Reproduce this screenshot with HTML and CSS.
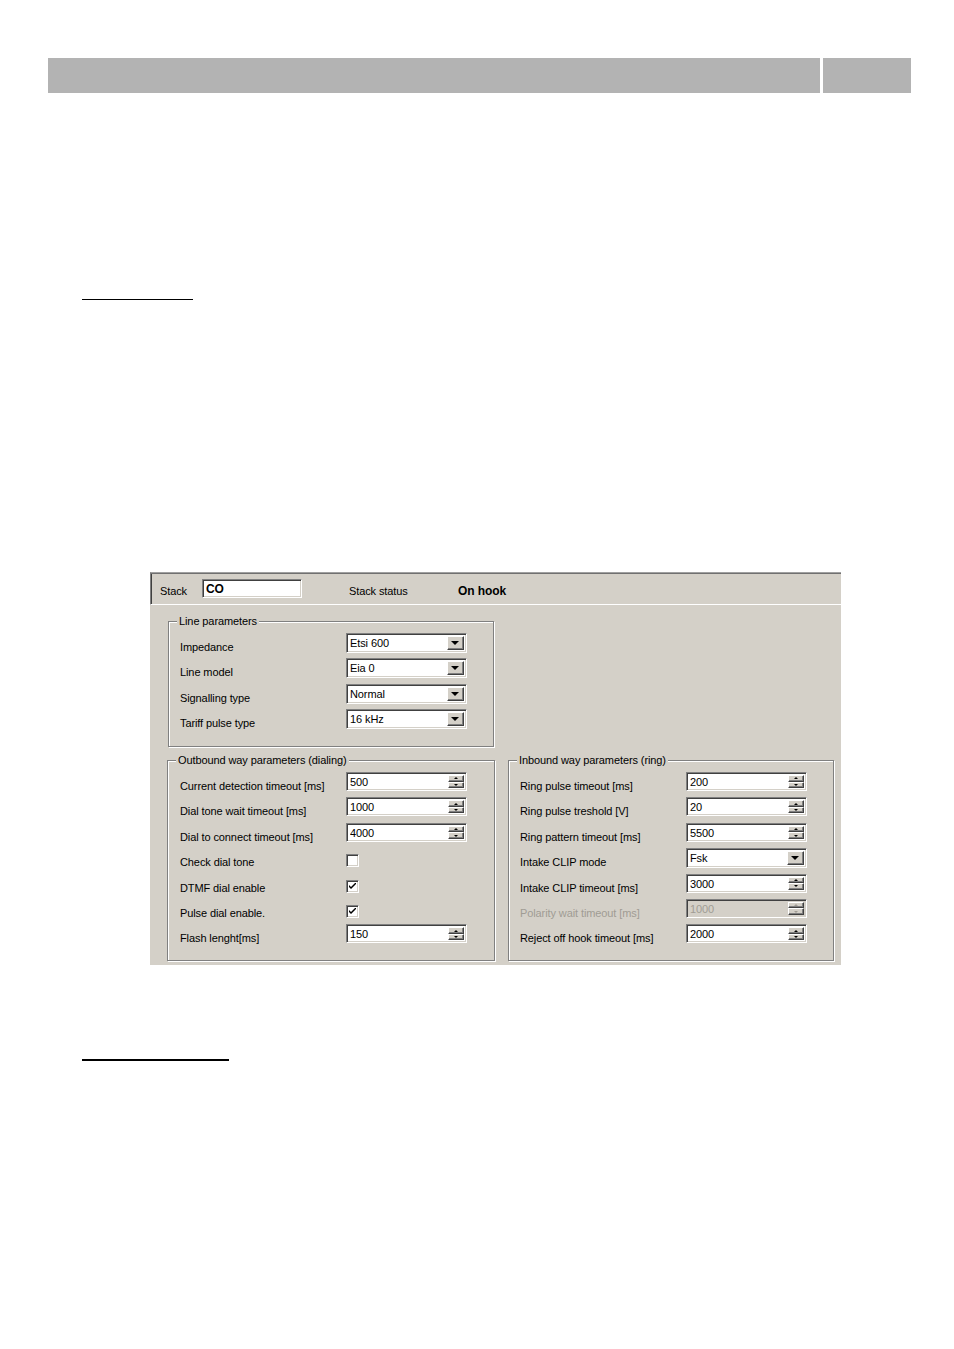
FILE: index.html
```html
<!DOCTYPE html>
<html>
<head>
<meta charset="utf-8">
<link rel="stylesheet" href="styles.css">
</head>
<body>
<div class="topbar"><div class="seg seg-main"></div><div class="seg seg-side"></div></div>
<div class="rule rule-a"></div>
<div class="panel">
  <div class="stackbar">
    <span class="stack-lbl">Stack</span>
    <div class="edit stack-edit"><span class="val bold">CO</span></div>
    <span class="status-lbl">Stack status</span>
    <span class="status-val">On hook</span>
  </div>
  <div class="panel-body">
    <div class="group group-line">
      <span class="group-title">Line parameters</span>
      <div class="row"><span class="lbl">Impedance</span><div class="edit combo"><span class="val">Etsi 600</span><span class="btn dd"><i></i></span></div></div>
      <div class="row"><span class="lbl">Line model</span><div class="edit combo"><span class="val">Eia 0</span><span class="btn dd"><i></i></span></div></div>
      <div class="row"><span class="lbl">Signalling type</span><div class="edit combo"><span class="val">Normal</span><span class="btn dd"><i></i></span></div></div>
      <div class="row"><span class="lbl">Tariff pulse type</span><div class="edit combo"><span class="val">16 kHz</span><span class="btn dd"><i></i></span></div></div>
    </div>
    <div class="group-row">
      <div class="group group-out">
        <span class="group-title">Outbound way parameters (dialing)</span>
        <div class="row"><span class="lbl">Current detection timeout [ms]</span><div class="edit spin"><span class="val">500</span><span class="spinbox"><span class="btn up"><i></i></span><span class="btn down"><i></i></span></span></div></div>
        <div class="row"><span class="lbl">Dial tone wait timeout [ms]</span><div class="edit spin"><span class="val">1000</span><span class="spinbox"><span class="btn up"><i></i></span><span class="btn down"><i></i></span></span></div></div>
        <div class="row"><span class="lbl">Dial to connect timeout [ms]</span><div class="edit spin"><span class="val">4000</span><span class="spinbox"><span class="btn up"><i></i></span><span class="btn down"><i></i></span></span></div></div>
        <div class="row"><span class="lbl">Check dial tone</span><span class="check"></span></div>
        <div class="row"><span class="lbl">DTMF dial enable</span><span class="check checked"><svg viewBox="0 0 7 7" width="7" height="7"><path d="M0 2 L2 4 L7 -1 L7 1 L2 6 L0 4 Z" fill="#000"/></svg></span></div>
        <div class="row"><span class="lbl">Pulse dial enable.</span><span class="check checked"><svg viewBox="0 0 7 7" width="7" height="7"><path d="M0 2 L2 4 L7 -1 L7 1 L2 6 L0 4 Z" fill="#000"/></svg></span></div>
        <div class="row"><span class="lbl">Flash lenght[ms]</span><div class="edit spin"><span class="val">150</span><span class="spinbox"><span class="btn up"><i></i></span><span class="btn down"><i></i></span></span></div></div>
      </div>
      <div class="group group-in">
        <span class="group-title">Inbound way parameters (ring)</span>
        <div class="row"><span class="lbl">Ring pulse timeout [ms]</span><div class="edit spin"><span class="val">200</span><span class="spinbox"><span class="btn up"><i></i></span><span class="btn down"><i></i></span></span></div></div>
        <div class="row"><span class="lbl">Ring pulse treshold [V]</span><div class="edit spin"><span class="val">20</span><span class="spinbox"><span class="btn up"><i></i></span><span class="btn down"><i></i></span></span></div></div>
        <div class="row"><span class="lbl">Ring pattern timeout [ms]</span><div class="edit spin"><span class="val">5500</span><span class="spinbox"><span class="btn up"><i></i></span><span class="btn down"><i></i></span></span></div></div>
        <div class="row"><span class="lbl">Intake CLIP mode</span><div class="edit combo"><span class="val">Fsk</span><span class="btn dd"><i></i></span></div></div>
        <div class="row"><span class="lbl">Intake CLIP timeout [ms]</span><div class="edit spin"><span class="val">3000</span><span class="spinbox"><span class="btn up"><i></i></span><span class="btn down"><i></i></span></span></div></div>
        <div class="row disabled"><span class="lbl">Polarity wait timeout [ms]</span><div class="edit spin"><span class="val">1000</span><span class="spinbox"><span class="btn up"><i></i></span><span class="btn down"><i></i></span></span></div></div>
        <div class="row"><span class="lbl">Reject off hook timeout [ms]</span><div class="edit spin"><span class="val">2000</span><span class="spinbox"><span class="btn up"><i></i></span><span class="btn down"><i></i></span></span></div></div>
      </div>
    </div>
  </div>
</div>
<div class="rule rule-b"></div>
</body>
</html>
```
FILE: styles.css
```css
html, body {
  margin: 0;
  padding: 0;
  background: #ffffff;
}
body {
  font-family: "Liberation Sans", Arial, sans-serif;
  font-size: 11px;
  letter-spacing: -0.1px;
  color: #000;
}
.topbar {
  display: flex;
  gap: 3px;
  margin: 58px 43px 0 48px;
  height: 35px;
}
.seg {
  background: #b3b3b3;
  height: 35px;
}
.seg-main { flex: 1; }
.seg-side { width: 88px; }

.rule {
  background: #000;
  margin-left: 82px;
}
.rule-a {
  margin-top: 206px;
  width: 111px;
  height: 1px;
}
.rule-b {
  margin-top: 94px;
  width: 147px;
  height: 2px;
}

.panel {
  margin-top: 272px;
  margin-left: 150px;
  width: 691px;
  height: 393px;
  background: #d4d0c8;
  box-sizing: border-box;
}
.stackbar {
  box-sizing: border-box;
  height: 33px;
  border-top: 1px solid #a0a0a0;
  border-left: 1px solid #808080;
  border-bottom: 1px solid #ffffff;
  box-shadow: inset 0 1px 0 #707070, inset 1px 0 0 #404040;
  display: flex;
  align-items: center;
  padding-left: 9px;
  padding-top: 1px;
}
.stack-lbl { width: 42px; line-height: 13px; margin-top: 4px; }
.stackbar .stack-edit { width: 100px; height: 19px; margin-top: -2px; }
.status-lbl { margin-left: 47px; width: 109px; line-height: 13px; margin-top: 4px; }
.status-val { font-weight: bold; font-size: 12px; line-height: 13px; margin-top: 4px; }
.bold { font-weight: bold; font-size: 12px; }

.panel-body {
  padding: 16px 0 0 17px;
}
.group {
  position: relative;
  box-sizing: border-box;
  border: 1px solid #808080;
  box-shadow: inset 1px 1px 0 #ffffff, 1px 1px 0 #ffffff;
  padding: 11px 0 0 12px;
}
.group-line {
  margin-left: 1px;
  width: 326px;
  height: 126px;
  padding-left: 11px;
}
.group-row {
  display: flex;
  gap: 13px;
  margin-top: 13px;
}
.group-out {
  width: 328px;
  height: 201px;
}
.group-in {
  width: 326px;
  height: 201px;
  padding-left: 11px;
}
.group-title {
  position: absolute;
  top: -7px;
  left: 8px;
  padding: 0 2px;
  background: #d4d0c8;
  line-height: 13px;
}
.row {
  display: grid;
  grid-template-columns: 166px 121px;
  align-items: start;
  height: 25.4px;
}
.lbl {
  line-height: 13px;
  margin-top: 8px;
  white-space: nowrap;
}
.edit {
  box-sizing: border-box;
  width: 121px;
  height: 19px;
  background: #ffffff;
  border-top: 1px solid #808080;
  border-left: 1px solid #808080;
  border-right: 1px solid #ffffff;
  border-bottom: 1px solid #ffffff;
  box-shadow: inset 1px 1px 0 #404040, inset -1px -1px 0 #d4d0c8;
  display: flex;
  align-items: stretch;
  padding: 2px 2px 2px 3px;
}
.combo { height: 20px; }
.val {
  flex: 1;
  line-height: 14px;
  white-space: nowrap;
  overflow: hidden;
}
.btn {
  box-sizing: border-box;
  background: #d4d0c8;
  border-top: 1px solid #ffffff;
  border-left: 1px solid #ffffff;
  border-right: 1px solid #404040;
  border-bottom: 1px solid #404040;
  box-shadow: inset -1px -1px 0 #808080;
  display: flex;
  align-items: center;
  justify-content: center;
}
.dd {
  width: 17px;
}
.dd i {
  display: block;
  width: 0;
  height: 0;
  border-left: 4px solid transparent;
  border-right: 4px solid transparent;
  border-top: 4px solid #000;
  margin-right: 1px;
}
.spinbox {
  width: 16px;
  display: flex;
  flex-direction: column;
}
.spinbox .btn {
  flex: 1;
}
.up i, .down i {
  display: block;
  width: 0;
  height: 0;
  border-left: 2px solid transparent;
  border-right: 2px solid transparent;
  margin-right: 1px;
}
.up i { border-bottom: 2px solid #000; }
.down i { border-top: 2px solid #000; }

.check {
  box-sizing: border-box;
  width: 13px;
  height: 13px;
  margin-top: 6px;
  background: #ffffff;
  border-top: 1px solid #808080;
  border-left: 1px solid #808080;
  border-right: 1px solid #ffffff;
  border-bottom: 1px solid #ffffff;
  box-shadow: inset 1px 1px 0 #404040, inset -1px -1px 0 #d4d0c8;
  display: flex;
  align-items: center;
  justify-content: center;
}
.check svg { display: block; }

.disabled .lbl { color: #a09c94; }
.disabled .edit { background: #d4d0c8; }
.disabled .val { color: #a09c94; }
.disabled .up i { border-bottom-color: #a09c94; }
.disabled .down i { border-top-color: #a09c94; }
```
